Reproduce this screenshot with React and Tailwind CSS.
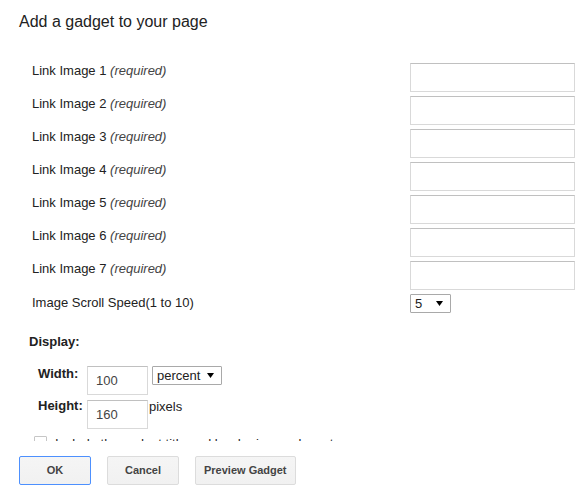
import React from "react";

function Arrow() {
  return (
    <svg width="7" height="5" viewBox="0 0 7 5" className="shrink-0">
      <path d="M0 0 L7 0 L3.5 5 Z" fill="#000" />
    </svg>
  );
}

function TextBox({ className = "", value = "" }) {
  return (
    <div
      className={
        "h-[29px] bg-white border border-[#d9d9d9] border-t-[#c0c0c0] flex items-center pl-[8px] text-[13px] text-[#444] " +
        className
      }
    >
      {value}
    </div>
  );
}

function Select({ value, className = "" }) {
  return (
    <div
      className={
        "h-[19px] bg-white border border-[#a9a9a9] rounded-[1px] flex items-center justify-between pl-[4px] pr-[7px] text-[13px] text-[#222] " +
        className
      }
    >
      <span className="leading-[16px]">{value}</span>
      <Arrow />
    </div>
  );
}

function Button({ children, primary }) {
  return (
    <div
      className={
        "h-[29px] min-w-[72px] px-[8px] flex items-center justify-center rounded-[2px] bg-gradient-to-b from-[#f5f5f5] to-[#f1f1f1] text-[11px] font-bold text-[#444] border " +
        (primary ? "border-[#4d90fe]" : "border-[#dcdcdc]")
      }
    >
      {children}
    </div>
  );
}

export default function App() {
  const links = [1, 2, 3, 4, 5, 6, 7];
  return (
    <div className="w-[582px] h-[495px] bg-white overflow-hidden flex flex-col font-['Liberation_Sans',Arial,sans-serif] text-[13px] text-[#222]">
      <h1 className="pl-[19px] pt-[12px] text-[16px] leading-[20px] text-[#222] font-normal">
        Add a gadget to your page
      </h1>

      <div className="h-[409px] overflow-hidden pt-[31px] flex flex-col">
        <div className="flex flex-col gap-[4px]">
          {links.map((n) => (
            <div key={n} className="flex items-start h-[29px]">
              <div className="w-[410px] pl-[32px] leading-[16px]">
                Link Image {n} <span className="italic text-[#444]">(required)</span>
              </div>
              <TextBox className="w-[165px]" />
            </div>
          ))}
          <div className="flex items-start h-[19px]">
            <div className="w-[410px] pl-[32px] pt-[1px] leading-[16px]">
              Image Scroll Speed(1 to 10)
            </div>
            <Select value="5" className="w-[41px]" />
          </div>
        </div>

        <div className="mt-[12px] ml-[29px] h-[1px] bg-[#e5e5e5]" />

        <div className="mt-[9px] pl-[29px] font-bold leading-[16px]">Display:</div>

        <div className="mt-[16px] flex items-start">
          <div className="w-[87px] pl-[38px] font-bold leading-[16px]">Width:</div>
          <TextBox className="w-[61px]" value="100" />
          <Select value="percent" className="w-[70px] ml-[4px]" />
        </div>

        <div className="mt-[3px] flex items-start">
          <div className="w-[87px] pl-[38px] font-bold leading-[16px]">Height:</div>
          <TextBox className="w-[61px] mt-[2px]" value="160" />
          <div className="ml-[1px] mt-[1px] leading-[16px]">pixels</div>
        </div>

        <div className="mt-[7px] flex items-start pl-[34px]">
          <div className="w-[13px] h-[13px] border border-[#c6c6c6] rounded-[1px] bg-white shrink-0" />
          <div className="ml-[8px] leading-[16px]">
            Include the gadget title and border in your layout
          </div>
        </div>
      </div>

      <div className="pt-[15px] pl-[19px] flex gap-[16px]">
        <Button primary>OK</Button>
        <Button>Cancel</Button>
        <Button>Preview Gadget</Button>
      </div>
    </div>
  );
}
